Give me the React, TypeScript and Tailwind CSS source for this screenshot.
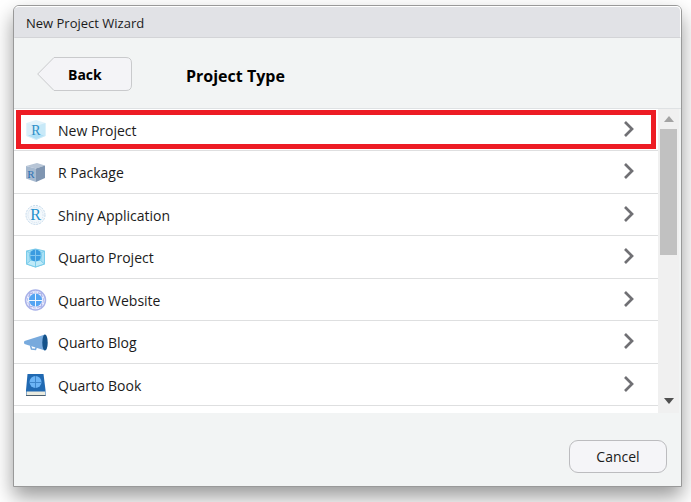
import type { ReactNode } from "react";

function RMark({ x, y, size, color }: { x: number; y: number; size: number; color: string }) {
  return (
    <text x={x} y={y} fontSize={size} fill={color} textAnchor="middle" fontFamily="'Liberation Serif', serif">
      R
    </text>
  );
}

function NewProjectIcon() {
  return (
    <svg viewBox="0 0 24 24" className="size-6" aria-hidden="true">
      <path d="M12 2 21.5 5V18L12 22 2.500 18V5Z" fill="#e2f3fb" />
      <path d="M2.500 5 12 8V22L2.500 18Z" fill="#d9eff9" />
      <path d="M21.500 5 12 8V22L21.500 18Z" fill="#c8e9f8" />
      <path d="M4 17.500 12 15 20 17.500 12 21Z" fill="#b0e0f6" />
      <RMark x={12} y={17} size={14} color="#2f8fc9" />
    </svg>
  );
}

function PackageIcon() {
  return (
    <svg viewBox="0 0 24 24" className="size-6" aria-hidden="true">
      <path d="M2 6 13 3 21 5.500 12 8.500Z" fill="#b7c5d6" />
      <path d="M2 6 12 8.500V22L2 18.500Z" fill="#a6b9cf" />
      <path d="M12 8.500 21 5.500V18L12 22Z" fill="#7f95b1" />
      <RMark x={7} y={18} size={11} color="#2d70b3" />
    </svg>
  );
}

function ShinyIcon() {
  return (
    <svg viewBox="0 0 24 24" className="size-6" aria-hidden="true">
      <circle cx="11.500" cy="12" r="9.500" fill="#f3f8fc" stroke="#c3d9eb" strokeWidth="1" strokeDasharray="2 1" />
      <circle cx="11.500" cy="12" r="7.500" fill="none" stroke="#d3e2f0" strokeWidth="1" strokeDasharray="1 1" />
      <RMark x={11.5} y={17} size={16} color="#2290cc" />
    </svg>
  );
}

function QuartoProjectIcon() {
  return (
    <svg viewBox="0 0 24 24" className="size-6" aria-hidden="true">
      <path d="M2.500 6 11.500 4 20.500 6V19L11.500 22 2.500 19Z" fill="#a9e0f5" stroke="#7accea" strokeWidth="1" />
      <path d="M2.500 19 6.500 15.500H16.500L20.500 19 11.500 22Z" fill="#bfeaf8" stroke="#7accea" strokeWidth="1" />
      <circle cx="11.500" cy="10.500" r="6" fill="#3a9be0" />
      <path d="M11.500 4.500V16.500M5.500 10.500H17.500" stroke="#82c6f0" strokeWidth="1" />
      <path d="M2.500 6 6 8V15.500M20.500 6 17 8V15.500M11.500 16.500V22" fill="none" stroke="#7accea" strokeWidth="1" />
    </svg>
  );
}

function QuartoWebsiteIcon() {
  return (
    <svg viewBox="0 0 24 24" className="size-6" aria-hidden="true">
      <circle cx="11.500" cy="12" r="10" fill="#edf0fd" stroke="#aab3e9" strokeWidth="1.500" />
      <circle cx="11.500" cy="12" r="8" fill="none" stroke="#b9c0ef" strokeWidth="1" strokeDasharray="3 1" />
      <path d="M5 5Q11.500 8 18 5M5 19Q11.500 16 18 19M5 5Q8 12 5 19M18 5Q15 12 18 19" fill="none" stroke="#a8afe9" strokeWidth="1" />
      <circle cx="11.500" cy="12" r="6.500" fill="#54a5f2" />
      <path d="M11.500 5.500V18.500M5 12.500H18" stroke="#f0f8ff" strokeWidth="1" />
    </svg>
  );
}

function BlogIcon() {
  return (
    <svg viewBox="0 0 24 24" className="size-6" aria-hidden="true">
      <path d="M6.500 15.500 7.500 19 11.500 19.500 12.500 16.500" fill="none" stroke="#78aadd" strokeWidth="1.500" />
      <path d="M.5 11 21 4.500V20.500L.5 14Q-.5 12.500 .5 11Z" fill="#78aadd" />
      <ellipse cx="21" cy="12.500" rx="2.700" ry="8" fill="#14528a" />
    </svg>
  );
}

function BookIcon() {
  return (
    <svg viewBox="0 0 24 24" className="size-6" aria-hidden="true">
      <path d="M3.500 1H19.500L21.500 17V23H2V17Z" fill="#2069b2" />
      <path d="M2.500 18.500H21V22H2.500Z" fill="#ebebdf" />
      <path d="M2 22.500H21.500" stroke="#4c5f70" strokeWidth="1" />
      <circle cx="11.500" cy="9" r="6" fill="#6cb4f5" />
      <path d="M11.500 3V15M5.500 9.500H17.500" stroke="#3e86cb" strokeWidth="1" />
    </svg>
  );
}

function Chevron() {
  return (
    <svg viewBox="0 0 10 18" className="h-[18px] w-[10px]" aria-hidden="true">
      <path d="M1 1 8 8 1 15" fill="none" stroke="#707074" strokeWidth="2.700" />
    </svg>
  );
}

const projectTypes: { label: string; icon: ReactNode; selected?: boolean }[] = [
  { label: "New Project", icon: <NewProjectIcon />, selected: true },
  { label: "R Package", icon: <PackageIcon /> },
  { label: "Shiny Application", icon: <ShinyIcon /> },
  { label: "Quarto Project", icon: <QuartoProjectIcon /> },
  { label: "Quarto Website", icon: <QuartoWebsiteIcon /> },
  { label: "Quarto Blog", icon: <BlogIcon /> },
  { label: "Quarto Book", icon: <BookIcon /> },
];

function Scrollbar() {
  return (
    <div className="flex w-[21px] shrink-0 flex-col items-center bg-[#f0f0f0]" aria-hidden="true">
      <div className="flex h-5 items-center">
        <svg viewBox="0 0 10 6" className="h-[6px] w-[10px]">
          <path d="M0 6 5 0 10 6Z" fill="#a3a3a3" />
        </svg>
      </div>
      <div className="min-h-0 w-full flex-1 px-[2px]">
        <div className="h-[48.5%] bg-[#c1c1c1]" />
      </div>
      <div className="flex h-6 items-center">
        <svg viewBox="0 0 10 6" className="h-[6px] w-[10px]">
          <path d="M0 0 5 6 10 0Z" fill="#505050" />
        </svg>
      </div>
    </div>
  );
}

export default function App() {
  return (
    <div className="flex h-screen flex-col overflow-hidden bg-white pt-[5px] pr-[9px] pb-[15px] pl-[13px] font-['Open_Sans','Noto_Sans',sans-serif] text-[#1b1b1b]">
      <div
        role="dialog"
        aria-labelledby="wizard-title"
        className="flex min-h-0 flex-1 flex-col rounded-t-md border border-[#999] bg-[#f2f4f4] shadow-[0_10px_20px_rgba(0,0,0,0.4)]"
      >
        <div id="wizard-title" className="flex h-8 shrink-0 items-center rounded-t-[5px] border border-t-white border-r-white border-b-[#d3d4d7] border-l-[#e1e2e6] bg-[#e1e2e6] pt-[3px] pl-[11px] text-[13px]">
          New Project Wizard
        </div>

        <header className="flex h-[71px] shrink-0 items-center border-b border-[#dfe2e4] pt-[2px] pl-[23px]">
          <button type="button" className="relative h-[34px] w-[95px] pt-[2px] pl-[31px] text-left text-sm font-bold text-black">
            <svg viewBox="0 0 95 34" className="absolute inset-0 size-full" aria-hidden="true">
              <path d="M17 .5H89Q94.500 .5 94.500 6V28Q94.500 33.500 89 33.500H17L.7 17Z" fill="#f4f4f7" stroke="#c9cacc" />
            </svg>
            <span className="relative">Back</span>
          </button>
          <h1 className="ml-[54px] pt-1 text-base font-bold text-black">Project Type</h1>
        </header>

        <div className="flex min-h-0 flex-1">
          <ul className="min-w-0 flex-1 overflow-hidden bg-white">
            {projectTypes.map(({ label, icon, selected }) => (
              <li key={label} className="relative odd:h-[42px] even:h-[43px]">
                <button
                  type="button"
                  className="flex size-full items-center border-b border-[#dedfe0] pr-6 pl-[10px] text-left text-sm"
                >
                  {icon}
                  <span className="ml-[10px] flex-1 pt-[2px]">{label}</span>
                  <Chevron />
                </button>
                {selected && <span className="pointer-events-none absolute inset-x-[2px] top-[1px] bottom-[2px] border-[5px] border-[#ed1c24]" />}
              </li>
            ))}
          </ul>
          <Scrollbar />
          <div className="w-[2px] shrink-0" />
        </div>

        <footer className="flex h-[73px] shrink-0 items-center justify-end pt-[13px] pr-[14px]">
          <button type="button" className="h-[33px] w-[98px] rounded-[9px] border border-[#bcbcbf] bg-[#f5f5f8] pt-[2px] text-sm">
            Cancel
          </button>
        </footer>
      </div>
    </div>
  );
}
